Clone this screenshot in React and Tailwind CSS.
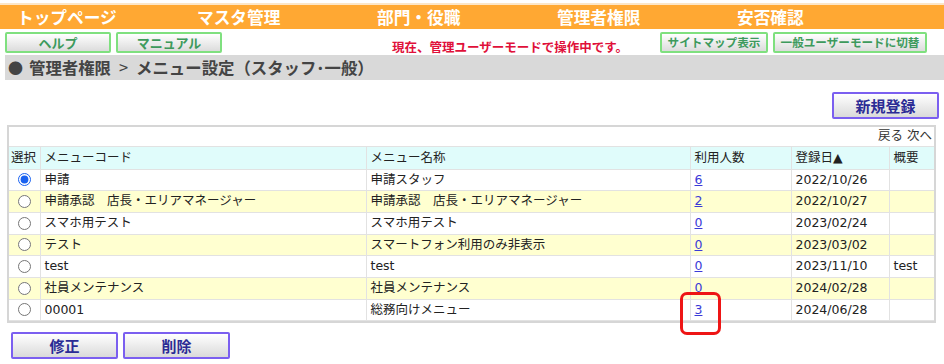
const navItems = ['トップページ', 'マスタ管理', '部門・役職', '管理者権限', '安否確認']

const rows = [
  { code: '申請', name: '申請スタッフ', users: '6', date: '2022/10/26', note: '', checked: true },
  { code: '申請承認　店長・エリアマネージャー', name: '申請承認　店長・エリアマネージャー', users: '2', date: '2022/10/27', note: '' },
  { code: 'スマホ用テスト', name: 'スマホ用テスト', users: '0', date: '2023/02/24', note: '' },
  { code: 'テスト', name: 'スマートフォン利用のみ非表示', users: '0', date: '2023/03/02', note: '' },
  { code: 'test', name: 'test', users: '0', date: '2023/11/10', note: 'test' },
  { code: '社員メンテナンス', name: '社員メンテナンス', users: '0', date: '2024/02/28', note: '' },
  { code: '00001', name: '総務向けメニュー', users: '3', date: '2024/06/28', note: '', marked: true },
]

function GreenButton({ children, width, size = 'text-[13px]' }) {
  return (
    <button
      type="button"
      className={`h-[21px] ${width} ${size} rounded-[2px] border-2 border-[#7fe07f] bg-gradient-to-b from-white to-[#dcdcdc] font-bold leading-none text-[#3d9a5c]`}
    >
      {children}
    </button>
  )
}

function PurpleButton({ children }) {
  return (
    <button
      type="button"
      className="h-[27px] w-[107px] rounded-[2px] border-2 border-[#7b5ff0] bg-gradient-to-b from-white to-[#dadada] text-[15px] font-bold leading-none text-[#2b2b95]"
    >
      {children}
    </button>
  )
}

const cell = 'border-r border-b border-[#e2e2e2] px-[4px] text-left font-normal leading-none whitespace-nowrap'

export default function App() {
  return (
    <div className="h-[364px] w-[944px] overflow-hidden bg-white font-['DejaVu_Sans','Noto_Sans_CJK_JP',sans-serif] text-[#222]">
      <div className="h-[3px] bg-white" />
      <div className="h-[2px] bg-[#fce6c8]" />
      <nav className="flex h-[24px] items-center bg-[#ffa833] pl-[17px] font-['Noto_Sans_CJK_JP',sans-serif] text-[16.7px] font-bold text-white">
        {navItems.map((item) => (
          <span key={item} className="w-[180px] shrink-0 leading-none">
            {item}
          </span>
        ))}
      </nav>

      <div className="mt-[3px] flex h-[21px] pl-[5px] pr-[17px] font-['Noto_Sans_CJK_JP',sans-serif]">
        <div className="flex gap-[5px]">
          <GreenButton width="w-[106px]">ヘルプ</GreenButton>
          <GreenButton width="w-[106px]">マニュアル</GreenButton>
        </div>
        <span className="ml-[170px] self-end text-[12.5px] font-bold leading-none text-[#e0103a]">
          現在、管理ユーザーモードで操作中です。
        </span>
        <div className="ml-auto flex gap-[5px]">
          <GreenButton width="w-[108px]" size="text-[11.6px]">サイトマップ表示</GreenButton>
          <GreenButton width="w-[154px]" size="text-[11.6px]">一般ユーザーモードに切替</GreenButton>
        </div>
      </div>

      <div className="ml-[5px] mt-[2px] flex h-[25px] items-center bg-[#d9d9d9] pl-[3px] font-['Noto_Sans_CJK_JP',sans-serif] text-[16.4px] font-bold leading-none text-[#444]">
        <span className="mr-[6px] text-[15px]">●</span>
        <span>管理者権限</span>
        <span className="mx-[8px] font-normal">&gt;</span>
        <span>メニュー設定（スタッフ･一般）</span>
      </div>

      <div className="mt-[12px] flex justify-end pr-[5px] font-['Noto_Sans_CJK_JP',sans-serif]">
        <PurpleButton>新規登録</PurpleButton>
      </div>

      <div className="relative ml-[7px] mt-[6px] w-[929px] border-2 border-[#d6d6d6] text-[12.5px]">
        <div className="flex h-[20px] items-center justify-end border-b border-[#e2e2e2] pr-[2px] leading-none text-[#333]">
          戻る 次へ
        </div>
        <table className="w-full table-fixed border-collapse">
          <colgroup>
            <col className="w-[31px]" />
            <col className="w-[326px]" />
            <col className="w-[324px]" />
            <col className="w-[101px]" />
            <col className="w-[98px]" />
            <col />
          </colgroup>
          <thead>
            <tr className="h-[22px] bg-[#e0fcfb]">
              <th className={`${cell} !px-[2px]`}>選択</th>
              <th className={cell}>メニューコード</th>
              <th className={cell}>メニュー名称</th>
              <th className={cell}>利用人数</th>
              <th className={cell}>登録日▲</th>
              <th className={`${cell} border-r-0`}>概要</th>
            </tr>
          </thead>
          <tbody>
            {rows.map((row, i) => (
              <tr key={row.code} className={`h-[21.7px] ${i % 2 === 1 ? 'bg-[#ffffd0]' : 'bg-white'}`}>
                <td className="border-r border-b border-[#e2e2e2] text-center leading-none">
                  <input
                    type="radio"
                    name="menu"
                    defaultChecked={row.checked}
                    className="m-0 h-[13px] w-[13px] align-middle accent-[#1a62f0]"
                  />
                </td>
                <td className={cell}>{row.code}</td>
                <td className={cell}>{row.name}</td>
                <td className={`${cell} relative`}>
                  <a href="#" className="text-[#3a3ad8] underline">{row.users}</a>
                  {row.marked && (
                    <span className="pointer-events-none absolute left-[-11px] top-[-8px] h-[43px] w-[41px] rounded-[7px] border-[3px] border-[#ee1515]" />
                  )}
                </td>
                <td className={cell}>{row.date}</td>
                <td className={`${cell} border-r-0`}>{row.note}</td>
              </tr>
            ))}
          </tbody>
        </table>
      </div>

      <div className="ml-[11px] mt-[9px] flex gap-[5px] font-['Noto_Sans_CJK_JP',sans-serif]">
        <PurpleButton>修正</PurpleButton>
        <PurpleButton>削除</PurpleButton>
      </div>
    </div>
  )
}
